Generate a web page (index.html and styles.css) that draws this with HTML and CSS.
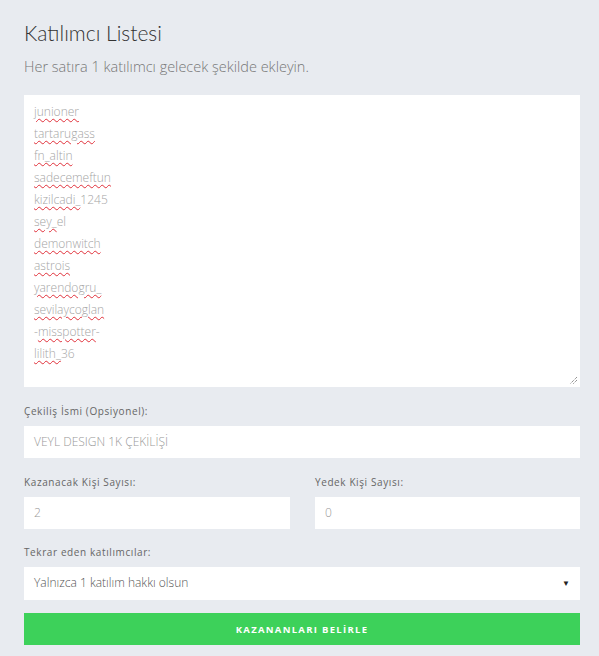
FILE: index.html
```html
<!DOCTYPE html>
<html lang="tr">
<head>
    <meta charset="UTF-8">
    <title>Katılımcı Listesi</title>
    <link rel="stylesheet" href="styles.css">
</head>
<body>
    <div class="container">
        <h1>Katılımcı Listesi</h1>
        <p class="hint">Her satıra 1 katılımcı gelecek şekilde ekleyin.</p>

        <!-- participant list, drawn as a box so the spellcheck marks show -->
        <div class="list-box">
            <div class="line"><span class="typo">junioner</span></div>
            <div class="line"><span class="typo">tartarugass</span></div>
            <div class="line"><span class="typo">fn_altin</span></div>
            <div class="line"><span class="typo">sadecemeftun</span></div>
            <div class="line"><span class="typo">kizilcadi_</span>1245</div>
            <div class="line"><span class="typo">sey_</span>el</div>
            <div class="line"><span class="typo">demonwitch</span></div>
            <div class="line"><span class="typo">astrois</span></div>
            <div class="line"><span class="typo">yarendogru_</span></div>
            <div class="line"><span class="typo">sevilaycoglan</span></div>
            <div class="line">-<span class="typo">misspotter</span>-</div>
            <div class="line"><span class="typo">lilith_</span>36</div>
            <svg class="grip" width="9" height="9" viewBox="0 0 9 9">
                <path d="M8 1 L1 8 M8 4 L4 8" stroke="#666" stroke-width="1" stroke-dasharray="1 1"/>
            </svg>
        </div>

        <div class="field">
            <label>Çekiliş İsmi (Opsiyonel):</label>
            <div class="input">VEYL DESIGN 1K ÇEKİLİŞİ</div>
        </div>

        <div class="row">
            <div class="field">
                <label>Kazanacak Kişi Sayısı:</label>
                <div class="input">2</div>
            </div>
            <div class="field">
                <label>Yedek Kişi Sayısı:</label>
                <div class="input">0</div>
            </div>
        </div>

        <div class="field last">
            <label>Tekrar eden katılımcılar:</label>
            <div class="input select">
                <span>Yalnızca 1 katılım hakkı olsun</span>
                <span class="arrow">&#9660;</span>
            </div>
        </div>

        <button class="submit-button">KAZANANLARI BELİRLE</button>
    </div>
</body>
</html>
```

FILE: styles.css
```css
/* General styles */
body {
    margin: 0;
    padding: 0;
    font-family: "Open Sans", Arial, sans-serif;
    background-color: #e8ebf0;
}

.container {
    padding: 15px 19px 0 24px;
}

h1 {
    margin: 0;
    font-family: Lato, "Open Sans", sans-serif;
    font-size: 21px;
    font-weight: 300;
    color: #333;
    line-height: 36px;
}

.hint {
    margin: 6px 0 18px;
    font-size: 14.5px;
    font-weight: 300;
    color: #777;
    line-height: 20px;
}

/* Participant list */
.list-box {
    position: relative;
    height: 292px;
    box-sizing: border-box;
    padding: 6px 10px;
    background-color: #ffffff;
    font-size: 12px;
    font-weight: 300;
    color: #a5a5a5;
}

.line {
    line-height: 22px;
}

.typo {
    text-decoration: underline wavy #e0303a;
    text-decoration-thickness: 1px;
    text-underline-offset: 2px;
}

.grip {
    position: absolute;
    right: 2px;
    bottom: 2px;
}

/* Form fields */
.field {
    margin-top: 17px;
}

.field.last {
    margin-top: 16px;
}

.field label {
    display: block;
    font-size: 10px;
    letter-spacing: 0.6px;
    color: #666;
    line-height: 14px;
    margin-bottom: 8px;
}

.input {
    height: 32px;
    box-sizing: border-box;
    padding: 0 10px;
    background-color: #ffffff;
    font-size: 12px;
    font-weight: 300;
    color: #999;
    line-height: 32px;
}

.row {
    display: grid;
    grid-template-columns: 266px 265px;
    column-gap: 25px;
}

.select {
    display: flex;
    justify-content: space-between;
    height: 33px;
    color: #555;
    font-weight: 300;
}

.arrow {
    font-size: 8px;
    color: #222;
}

.submit-button {
    display: block;
    width: 100%;
    height: 32px;
    margin-top: 13px;
    border: none;
    background-color: #3dd15a;
    color: #ffffff;
    font-family: "Open Sans", Arial, sans-serif;
    font-size: 9.5px;
    font-weight: 700;
    letter-spacing: 1.3px;
    cursor: pointer;
}
```
